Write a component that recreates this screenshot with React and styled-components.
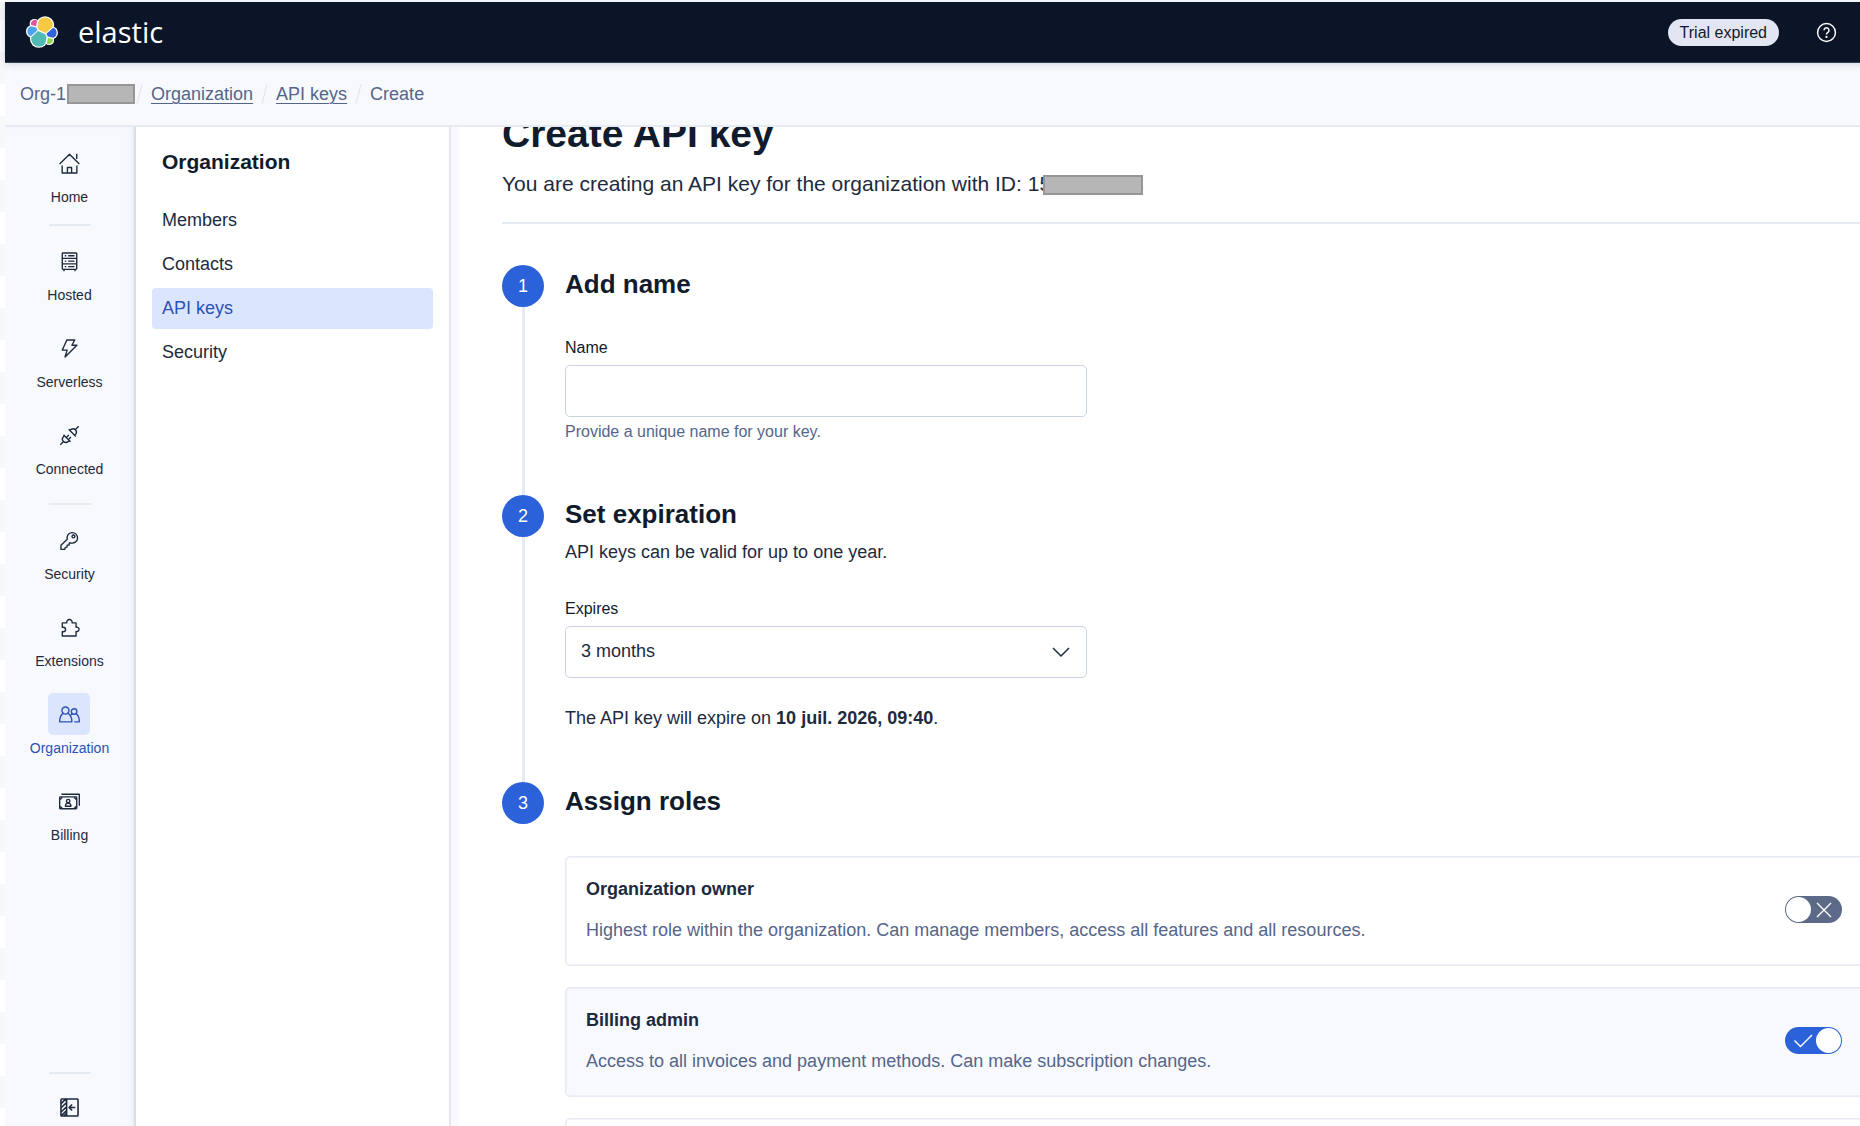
import React, { useLayoutEffect, useRef, useState } from 'react';
import styled, { createGlobalStyle, css } from 'styled-components';

const color = {
  header: '#0b1527',
  body: '#f7f9fd',
  white: '#ffffff',
  border: '#e6eaf3',
  field: '#cad3e6',
  primary: '#2b61d9',
  primaryText: '#2c51b8',
  primarySoft: '#dbe5fe',
  title: '#101b2c',
  text: '#1d2a3e',
  subdued: '#55658a',
  off: '#5c6a88',
};

const GlobalStyle = createGlobalStyle`
  *, *::before, *::after { box-sizing: border-box; }
  body {
    margin: 0;
    overflow: hidden;
    background: ${color.white};
    color: ${color.text};
    font-family: "Liberation Sans", Arial, Helvetica, sans-serif;
    font-size: 18px;
    line-height: 24px;
  }
  button, input, select { font: inherit; color: inherit; }
  h1, h2, h3, p, ul, ol { margin: 0; padding: 0; }
  ul, ol { list-style: none; }
`;

const Window = styled.div`
  display: flex;
  height: 100vh;
  padding-top: 2px;
  overflow: hidden;
`;

const Edge = styled.div`
  flex: 0 0 5px;
  background: repeating-linear-gradient(#f7f8f8 0 18px, #ffffff 18px 50px, #f7f8f8 50px 64px);
`;

const Shell = styled.div`
  flex: 0 0 100%;
  display: flex;
  flex-direction: column;
  min-height: 0;
`;

const Header = styled.header`
  flex: none;
  display: flex;
  align-items: center;
  height: 61px;
  padding: 0 28px 0 21px;
  background: ${color.header};
  border-bottom: 1px solid #3a4456;
  box-shadow: 0 1px 8px rgba(30, 45, 75, 0.18);
  z-index: 2;
`;

const Brand = styled.a`
  display: flex;
  align-items: center;
  gap: 20px;
  color: ${color.white};
  text-decoration: none;
`;

const Wordmark = styled.span`
  font-family: "Open Sans", "Noto Sans", sans-serif;
  font-size: 29px;
  line-height: 36px;
`;

const HeaderActions = styled.div`
  display: flex;
  align-items: center;
  gap: 37px;
  margin-left: auto;
`;

const Badge = styled.span`
  padding: 0 12px;
  border-radius: 14px;
  background: #e2e6f2;
  color: ${color.title};
  font-size: 16px;
  line-height: 27px;
`;

const IconButton = styled.button`
  display: flex;
  padding: 0;
  border: 0;
  background: none;
  color: ${color.white};
`;

const Crumbs = styled.nav`
  flex: none;
  height: 64px;
  padding: 0 15px;
  background: ${color.body};
  border-bottom: 2px solid ${color.border};
  z-index: 1;

  ol {
    display: flex;
    align-items: center;
    height: 100%;
  }
  li {
    display: flex;
    align-items: center;
    color: ${color.subdued};
  }
  li + li::before {
    content: "";
    width: 1px;
    height: 20px;
    margin: 0 11px;
    background: #dde2ee;
    transform: rotate(15deg);
  }
`;

const CrumbLink = styled.a`
  color: inherit;
  text-decoration: underline;
  text-decoration-thickness: 1px;
  text-underline-offset: 3px;
`;

const Redaction = styled.span`
  display: inline-block;
  position: relative;
  z-index: 1;
  width: ${(p) => p.$width}px;
  height: 20px;
  border: 2px solid #969696;
  background: #b6b6b6;
  vertical-align: middle;
`;

const OrgRedaction = styled(Redaction)`
  margin: 0 -7px 0 1px;
`;

const IdRedaction = styled(Redaction)`
  margin: 0 -11px 0 -8px;
`;

const Body = styled.div`
  flex: 1;
  display: flex;
  min-height: 0;
`;

const Rail = styled.nav`
  flex: 0 0 131px;
  display: flex;
  flex-direction: column;
  align-items: center;
  padding-top: 15px;
  background: ${color.body};
  border-right: 2px solid #d6deea;
  box-shadow: inset -5px 0 6px -4px rgba(60, 90, 140, 0.1);
`;

const RailGroup = styled.ul`
  display: flex;
  flex-direction: column;
  gap: 22px;
`;

const RailDivider = styled.hr`
  width: 42px;
  height: 2px;
  margin: ${(p) => p.$before}px 0 14px;
  border: 0;
  background: ${color.border};
`;

const RailLink = styled.a`
  display: flex;
  flex-direction: column;
  align-items: center;
  gap: 3px;
  color: ${(p) => (p.$active ? color.primaryText : color.text)};
  font-size: 14px;
  line-height: 20px;
  text-decoration: none;
`;

const RailIcon = styled.span`
  display: grid;
  place-items: center;
  width: 42px;
  height: 42px;
  border-radius: 5px;
  background: ${(p) => (p.$active ? color.primarySoft : 'transparent')};
`;

const RailFooter = styled.div`
  display: flex;
  flex-direction: column;
  align-items: center;
  margin-top: auto;
`;

const CollapseButton = styled(IconButton)`
  align-items: center;
  height: 38px;
  color: ${color.text};
`;

const Panel = styled.nav`
  flex: 0 0 315px;
  padding: 21px 16px;
  background: ${color.white};
  border-right: 2px solid #e3e8f0;
`;

const PanelTitle = styled.h2`
  padding: 0 10px;
  margin-bottom: 24px;
  color: ${color.title};
  font-size: 21px;
  line-height: 28px;
`;

const PanelList = styled.ul`
  display: flex;
  flex-direction: column;
  gap: 3px;
`;

const PanelLink = styled.a`
  display: block;
  padding: 0 10px;
  border-radius: 4px;
  line-height: 41px;
  color: ${color.text};
  text-decoration: none;
  ${(p) =>
    p.$active &&
    css`
      background: ${color.primarySoft};
      color: ${color.primaryText};
    `}
`;

const Main = styled.main`
  flex: 1;
  min-width: 0;
  padding: 32px 0 48px 43px;
  border-left: 8px solid ${color.body};
  background: ${color.white};
  overflow: hidden auto;
  scrollbar-width: none;
`;

const PageHeader = styled.header`
  padding-bottom: 23px;
  margin-bottom: 41px;
  border-bottom: 2px solid ${color.border};
`;

const PageTitle = styled.h1`
  margin-bottom: 11px;
  color: ${color.title};
  font-size: 39px;
  line-height: 48px;
`;

const Lead = styled.p`
  font-size: 21px;
  line-height: 30px;
`;

const Step = styled.li`
  display: grid;
  grid-template-columns: 42px minmax(0, 1fr);
  column-gap: 21px;
`;

const StepMarker = styled.div`
  display: flex;
  flex-direction: column;
  align-items: center;

  span {
    width: 42px;
    border-radius: 50%;
    background: ${color.primary};
    color: ${color.white};
    line-height: 42px;
    text-align: center;
  }
  &::after {
    content: "";
    flex: 1;
    width: 3px;
    background: ${color.border};
  }
  ${Step}:last-child &::after {
    display: none;
  }
`;

const StepBody = styled.div`
  padding-bottom: 52px;
`;

const StepTitle = styled.h2`
  color: ${color.title};
  font-size: 26px;
  line-height: 38px;
`;

const StepText = styled.p`
  margin-top: 7px;
`;

const Field = styled.div`
  display: flex;
  flex-direction: column;
  width: 522px;
  margin-top: 35px;
`;

const Label = styled.label`
  margin-bottom: 7px;
  color: ${color.title};
  font-size: 16px;
  line-height: 20px;
`;

const control = css`
  width: 100%;
  height: 52px;
  padding: 0 15px 2px;
  border: 1px solid ${color.field};
  border-radius: 5px;
  outline: 0;
  background: ${color.white};
`;

const TextInput = styled.input`
  ${control}
`;

const Help = styled.p`
  margin-top: 4px;
  color: ${color.subdued};
  font-size: 16px;
  line-height: 22px;
`;

const Stack = styled.div`
  display: grid;
  align-items: center;

  > * { grid-area: 1 / 1; }
  > svg { pointer-events: none; z-index: 1; }
`;

const SelectBox = styled(Stack)`
  > svg { justify-self: end; margin-right: 16px; }
`;

const Select = styled.select`
  ${control}
  appearance: none;
`;

const Notice = styled.p`
  margin-top: 28px;
`;

const Roles = styled.ul`
  display: flex;
  flex-direction: column;
  gap: 21px;
  margin-top: 36px;
`;

const RoleCard = styled.li`
  display: flex;
  align-items: center;
  justify-content: space-between;
  min-height: 110px;
  padding: 20px 22px 23px 20px;
  border: 1px solid ${color.border};
  border-radius: 5px;
  background: ${(p) => (p.$on ? color.body : color.white)};
  box-shadow: inset 0 0 0 1px rgba(228, 232, 242, 0.5);
`;

const RoleName = styled.label`
  display: block;
  margin-bottom: 17px;
  font-weight: 700;
`;

const RoleText = styled.p`
  color: ${color.subdued};
`;

const SwitchBox = styled(Stack)`
  > svg {
    justify-self: ${(p) => (p.$on ? 'start' : 'end')};
    margin: 0 8px;
  }
`;

const SwitchInput = styled.input`
  appearance: none;
  display: flex;
  width: 57px;
  height: 27px;
  margin: 0;
  padding: 1px;
  border-radius: 14px;
  background: ${color.off};

  &::before {
    content: "";
    width: 25px;
    border-radius: 50%;
    background: ${color.white};
  }
  &:checked {
    justify-content: flex-end;
    background: ${color.primary};
  }
`;

const Line = ({ size = 21, children, width = 1.05 }) => (
  <svg width={size} height={size} viewBox="0 0 16 16" fill="none" stroke="currentColor" strokeWidth={width} strokeLinejoin="round" aria-hidden="true">
    {children}
  </svg>
);

const icons = {
  home: (
    <Line>
      <path d="M.5 8.4 8 .9l7.5 7.5M13.5.6v4M2.4 9.6v5.6h4V11h3.2v4.2h4V9.6M6.4 15.2h3.2" />
    </Line>
  ),
  hosted: (
    <Line>
      <rect x="2.5" y="1.5" width="11" height="12.5" rx=".6" />
      <path d="M2.5 5.6h11M2.5 9.8h11M3.8 14v1.4M12.2 14v1.4M7 3.6h4.8M7 7.7h4.8M7 11.9h4.8M4.4 3.6h1.1M4.4 7.7h1.1M4.4 11.9h1.1" />
    </Line>
  ),
  serverless: (
    <Line>
      <path d="M6 1.5h6L9.8 5.5h3.8L4.6 14.5 6.2 9.2H2.5z" />
    </Line>
  ),
  connected: (
    <Line>
      <path d="M1 15l2.6-2.6M12.6 3.4 15 1M3.4 7.4l5.4 5.4M4.100 8.100l-.7.900a2.500 2.500 0 0 0 3.600 3.600l1.100-.7M6 9.200l1.500-1.500M7.600 10.600l1.500-1.500M7.400 3.300l5.400 5.400M8.200 4.100l1-.8a2.600 2.600 0 0 1 3.600 3.600l-.8 1" />
    </Line>
  ),
  security: (
    <Line>
      <path d="M6.300 7.100A4 4 0 1 1 9 9.800L7.900 9.900l-.2 1.500-1.500.2-.2 1.500-1.300.3-.3 1.400H1.500v-3.100z" />
      <circle cx="11" cy="4.900" r="1.100" />
    </Line>
  ),
  extensions: (
    <Line>
      <path d="M2.500 4.500h3.400a2.100 2.100 0 1 1 4.100 0h3v3.300a1.700 1.700 0 1 1 0 3.200v3.500H2.500v-3.300h.8a1.700 1.700 0 0 0 0-3.400h-.8z" />
    </Line>
  ),
  organization: (
    <Line>
      <circle cx="4.900" cy="5" r="2.700" />
      <circle cx="11.500" cy="5.700" r="2.100" />
      <path d="M3.200 7.200C1.400 8.300.5 10.600.5 13.600h9.300c0-3-.9-5.300-2.900-6.400M12.900 7.400c1.700 1 2.600 3.200 2.600 6.200h-3.900M10.100 7.400 9.100 8.500" />
    </Line>
  ),
  billing: (
    <Line>
      <path d="M1.800 2.500h13.700v8.700" />
      <rect x=".5" y="4.500" width="13" height="9" rx=".5" />
      <circle cx="7" cy="7.700" r="1.300" />
      <path d="M4.900 11.600c0-1.700.9-2.400 2.100-2.400s2.100.7 2.100 2.400zM.8 6.400 2.500 4.700M11.500 4.700l1.700 1.700M.8 11.600l1.700 1.700M11.500 13.300l1.700-1.700" />
    </Line>
  ),
  collapse: (
    <Line width={1.2}>
      <rect x="1.500" y="1.500" width="13" height="13" rx=".6" />
      <path d="M5.800 1.500v13M12.400 8H8M10 5.700 7.700 8l2.300 2.300M1.600 5l3.500-3.400M1.600 8.200l4.200-4M1.600 11.400l4.200-4M1.600 14.400l4.200-4M3.800 14.400l2-2" />
    </Line>
  ),
};

const ElasticLogo = () => (
  <svg width="32" height="32" viewBox="0 0 32 32" aria-hidden="true">
    <g fill="#fff">
      <circle cx="19.100" cy="9.200" r="9" />
      <circle cx="12.900" cy="22.800" r="9" />
      <circle cx="8.500" cy="7.800" r="4.900" />
      <circle cx="6.400" cy="15.400" r="6.400" />
      <circle cx="25.600" cy="16.700" r="6.400" />
      <circle cx="23.200" cy="24.200" r="4.900" />
    </g>
    <path fill="#f6c944" d="M12.580 13.787l7.002 3.211 7.066-6.213a7.849 7.849 0 0 0 .152-1.557c0-4.287-3.464-7.774-7.722-7.774a7.696 7.696 0 0 0-6.363 3.373l-1.176 6.122z" />
    <path fill="#50b9b3" d="M5.333 21.228a8.130 8.130 0 0 0-.156 1.570c0 4.300 3.487 7.798 7.773 7.798a7.750 7.750 0 0 0 6.394-3.392l1.167-6.106-1.558-2.990-7.029-3.215z" />
    <path fill="#e2569b" d="M5.290 9.080l4.800 1.138L11.140 4.740a3.785 3.785 0 0 0-5.850 4.340z" />
    <path fill="#4ba2ee" d="M4.873 10.223a5.480 5.480 0 0 0-3.493 5.100 5.320 5.320 0 0 0 3.360 4.970l6.734-6.113-1.236-2.653z" />
    <path fill="#92d34a" d="M20.873 27.200a3.750 3.750 0 0 0 2.284.785 3.790 3.790 0 0 0 3.546-5.060l-4.794-1.125z" />
    <path fill="#3263dc" d="M21.848 20.563l5.280 1.237a5.490 5.490 0 0 0 3.490-5.100 5.320 5.320 0 0 0-3.369-4.980l-6.905 6.070z" />
  </svg>
);

const HelpIcon = () => (
  <Line width={1.1}>
    <circle cx="8" cy="8" r="6.800" />
    <path d="M6.100 6.300a1.900 1.900 0 1 1 2.900 1.600c-.7.400-1 .8-1 1.600" />
    <path d="M8 10.600v1.500" strokeWidth="1.500" />
  </Line>
);

const railGroups = [
  { items: [{ label: 'Home', icon: 'home' }] },
  {
    before: 17,
    items: [
      { label: 'Hosted', icon: 'hosted' },
      { label: 'Serverless', icon: 'serverless' },
      { label: 'Connected', icon: 'connected' },
    ],
  },
  {
    before: 24,
    items: [
      { label: 'Security', icon: 'security' },
      { label: 'Extensions', icon: 'extensions' },
      { label: 'Organization', icon: 'organization', active: true },
      { label: 'Billing', icon: 'billing' },
    ],
  },
];

const panelLinks = ['Members', 'Contacts', 'API keys', 'Security'];

const roles = [
  {
    id: 'owner',
    name: 'Organization owner',
    text: 'Highest role within the organization. Can manage members, access all features and all resources.',
    on: false,
  },
  {
    id: 'billing',
    name: 'Billing admin',
    text: 'Access to all invoices and payment methods. Can make subscription changes.',
    on: true,
  },
];

function Role({ id, name, text, on: initial }) {
  const [on, setOn] = useState(initial);
  return (
    <RoleCard $on={on}>
      <div>
        <RoleName htmlFor={id}>{name}</RoleName>
        <RoleText>{text}</RoleText>
      </div>
      <SwitchBox $on={on}>
        <SwitchInput id={id} type="checkbox" role="switch" checked={on} onChange={() => setOn(!on)} />
        <svg width="20" height="20" viewBox="0 0 20 20" fill="none" stroke="#fff" strokeWidth="1.400" aria-hidden="true">
          <path d={on ? 'M1.500 9.500l6 6L19 4' : 'M3 3l14 14M17 3L3 17'} />
        </svg>
      </SwitchBox>
    </RoleCard>
  );
}

export default function App() {
  const mainRef = useRef(null);

  // The form opens scrolled slightly past the top of the page title.
  useLayoutEffect(() => {
    mainRef.current.scrollTop = 49;
  }, []);

  return (
    <>
      <GlobalStyle />
      <Window>
        <Edge />
        <Shell>
          <Header>
            <Brand href="#">
              <ElasticLogo />
              <Wordmark>elastic</Wordmark>
            </Brand>
            <HeaderActions>
              <Badge>Trial expired</Badge>
              <IconButton type="button" aria-label="Help">
                <HelpIcon />
              </IconButton>
            </HeaderActions>
          </Header>

          <Crumbs aria-label="Breadcrumbs">
            <ol>
              <li>
                Org-1
                <OrgRedaction $width={68} />
              </li>
              <li><CrumbLink href="#">Organization</CrumbLink></li>
              <li><CrumbLink href="#">API keys</CrumbLink></li>
              <li aria-current="page">Create</li>
            </ol>
          </Crumbs>

          <Body>
            <Rail aria-label="Main">
              {railGroups.map(({ before, items }) => (
                <React.Fragment key={items[0].label}>
                  {before && <RailDivider $before={before} />}
                  <RailGroup>
                    {items.map(({ label, icon, active }) => (
                      <li key={label}>
                        <RailLink href="#" $active={active}>
                          <RailIcon $active={active}>{icons[icon]}</RailIcon>
                          {label}
                        </RailLink>
                      </li>
                    ))}
                  </RailGroup>
                </React.Fragment>
              ))}
              <RailFooter>
                <RailDivider $before={17} />
                <CollapseButton type="button" aria-label="Collapse navigation">
                  {icons.collapse}
                </CollapseButton>
              </RailFooter>
            </Rail>

            <Panel aria-label="Organization">
              <PanelTitle>Organization</PanelTitle>
              <PanelList>
                {panelLinks.map((label) => (
                  <li key={label}>
                    <PanelLink href="#" $active={label === 'API keys'}>{label}</PanelLink>
                  </li>
                ))}
              </PanelList>
            </Panel>

            <Main ref={mainRef}>
              <PageHeader>
                <PageTitle>Create API key</PageTitle>
                <Lead>
                  You are creating an API key for the organization with ID: 15
                  <IdRedaction $width={100} />3
                </Lead>
              </PageHeader>

              <ol>
                <Step>
                  <StepMarker><span>1</span></StepMarker>
                  <StepBody>
                    <StepTitle>Add name</StepTitle>
                    <Field>
                      <Label htmlFor="key-name">Name</Label>
                      <TextInput id="key-name" type="text" />
                      <Help>Provide a unique name for your key.</Help>
                    </Field>
                  </StepBody>
                </Step>
                <Step>
                  <StepMarker><span>2</span></StepMarker>
                  <StepBody>
                    <StepTitle>Set expiration</StepTitle>
                    <StepText>API keys can be valid for up to one year.</StepText>
                    <Field>
                      <Label htmlFor="key-expires">Expires</Label>
                      <SelectBox>
                        <Select id="key-expires" defaultValue="3">
                          <option value="3">3 months</option>
                        </Select>
                        <svg width="20" height="20" viewBox="0 0 20 20" fill="none" stroke={color.text} strokeWidth="1.500" aria-hidden="true">
                          <path d="M2 6l8 8 8-8" />
                        </svg>
                      </SelectBox>
                    </Field>
                    <Notice>
                      The API key will expire on <strong>10 juil. 2026, 09:40</strong>.
                    </Notice>
                  </StepBody>
                </Step>
                <Step>
                  <StepMarker><span>3</span></StepMarker>
                  <StepBody>
                    <StepTitle>Assign roles</StepTitle>
                    <Roles>
                      {roles.map((role) => (
                        <Role key={role.id} {...role} />
                      ))}
                      <RoleCard />
                    </Roles>
                  </StepBody>
                </Step>
              </ol>
            </Main>
          </Body>
        </Shell>
      </Window>
    </>
  );
}
